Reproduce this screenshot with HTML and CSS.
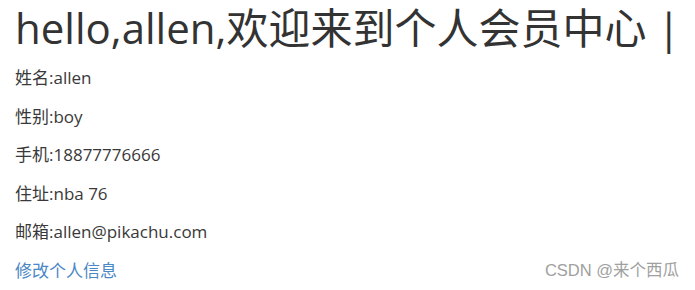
FILE: index.html
```html
<!DOCTYPE html>
<html lang="zh-CN">
<head>
    <meta charset="UTF-8">
    <title>会员中心</title>
    <link rel="stylesheet" href="styles.css">
</head>
<body>
    <div class="page">
        <h1 class="welcome">hello,allen,欢迎来到个人会员中心 | </h1>
        <p>姓名:allen</p>
        <p>性别:boy</p>
        <p>手机:18877776666</p>
        <p>住址:nba 76</p>
        <p>邮箱:allen@pikachu.com</p>
        <p><a href="#" class="edit-link">修改个人信息</a></p>
    </div>
    <div class="watermark">CSDN @来个西瓜</div>
</body>
</html>
```
FILE: styles.css
```css
body {
    margin: 0;
    font-family: "Open Sans", "Noto Sans CJK SC", sans-serif;
    color: #393939;
    background-color: #fff;
    position: relative;
    height: 290px;
    overflow: hidden;
}

.page {
    padding: 0 15px;
}

.welcome {
    margin: 3px 0 13px;
    font-size: 42px;
    font-weight: normal;
    line-height: 50px;
    color: #333;
    white-space: nowrap;
}

p {
    margin: 0 0 15px;
    font-size: 17px;
    line-height: 23.6px;
}

.edit-link {
    color: #4a87c5;
    text-decoration: none;
}

.watermark {
    position: absolute;
    right: 16px;
    bottom: 9px;
    font-family: "Liberation Sans", "Noto Sans CJK SC", sans-serif;
    font-size: 16.5px;
    color: #a0a0a0;
}
```
